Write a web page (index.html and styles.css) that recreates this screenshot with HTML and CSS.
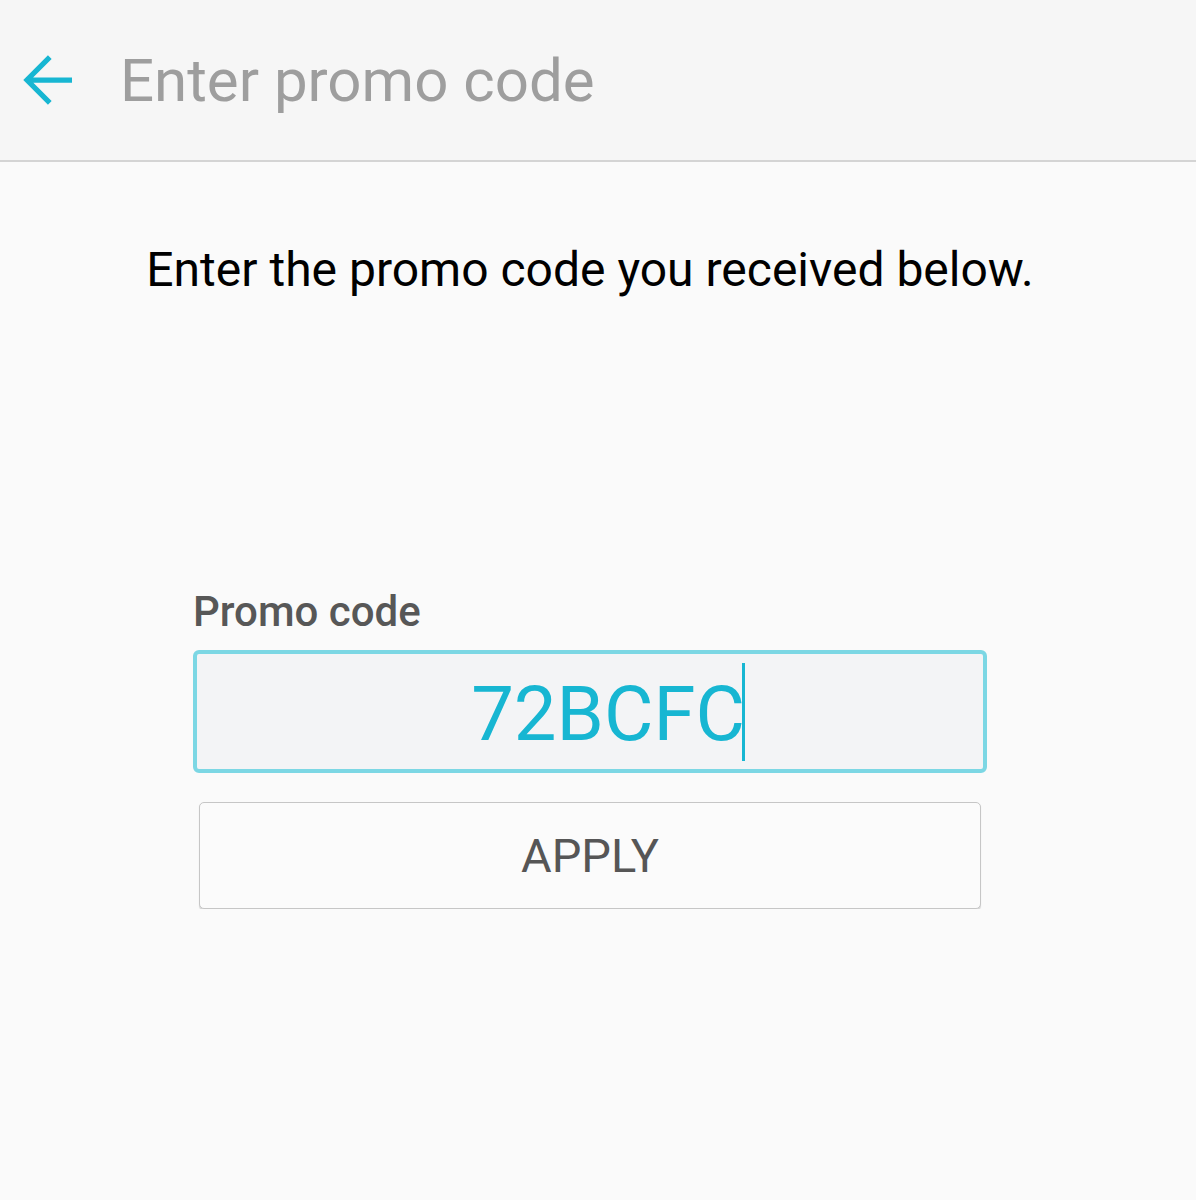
FILE: index.html
```html
<!DOCTYPE html>
<html>
<head>
<meta charset="utf-8">
<link rel="stylesheet" href="styles.css">
</head>
<body>
<header class="appbar">
  <svg class="back" viewBox="0 0 24 24" width="72" height="72">
    <path d="M20 12H5.2M12.6 4.4L5 12l7.6 7.6" fill="none" stroke="#17b6d2" stroke-width="1.75"/>
  </svg>
  <h1 class="title">Enter promo code</h1>
</header>
<main class="content">
  <p class="intro">Enter the promo code you received below.</p>
  <div class="form">
    <label class="label">Promo code</label>
    <div class="field">
      <span class="value">72BCFC</span><span class="caret"></span>
    </div>
    <button class="apply">APPLY</button>
  </div>
</main>
</body>
</html>
```
FILE: styles.css
```css
html, body {
  margin: 0;
  padding: 0;
  background: #fafafa;
  font-family: Roboto, "Liberation Sans", sans-serif;
}
.appbar {
  height: 160px;
  background: #f6f6f6;
  border-bottom: 2px solid #d4d4d4;
  display: flex;
  align-items: center;
  padding-left: 12px;
}
.back {
  display: block;
}
.title {
  margin: 0 0 0 36px;
  font-weight: 400;
  font-size: 60px;
  color: #9e9e9e;
}
.content {
  display: flex;
  flex-direction: column;
  align-items: center;
  padding-right: 16px;
}
.intro {
  margin: 80px 0 0;
  font-size: 48px;
  line-height: 56px;
  color: #000;
}
.form {
  margin-top: 290px;
  width: 794px;
  display: flex;
  flex-direction: column;
}
.label {
  font-size: 42px;
  font-weight: 500;
  color: #575757;
  line-height: 48px;
}
.field {
  margin-top: 14px;
  height: 115px;
  border: 4.5px solid #7cd7e4;
  border-radius: 6px;
  background: #f3f4f6;
  display: flex;
  align-items: center;
  justify-content: center;
}
.value {
  font-size: 76px;
  color: #17b6d2;
  margin-left: 36px;
  padding-top: 4px;
}
.caret {
  width: 3px;
  height: 98px;
  background: #17b6d2;
  margin-left: -3px;
}
.apply {
  margin: 29px 6px 0;
  height: 107px;
  border: 1.5px solid #c6c6c6;
  border-radius: 5px;
  background: #fbfbfb;
  box-shadow: 0 1.5px 1px rgba(0,0,0,0.14);
  font-family: Roboto, "Liberation Sans", sans-serif;
  font-size: 47px;
  color: #565656;
  padding: 0;
}
```
